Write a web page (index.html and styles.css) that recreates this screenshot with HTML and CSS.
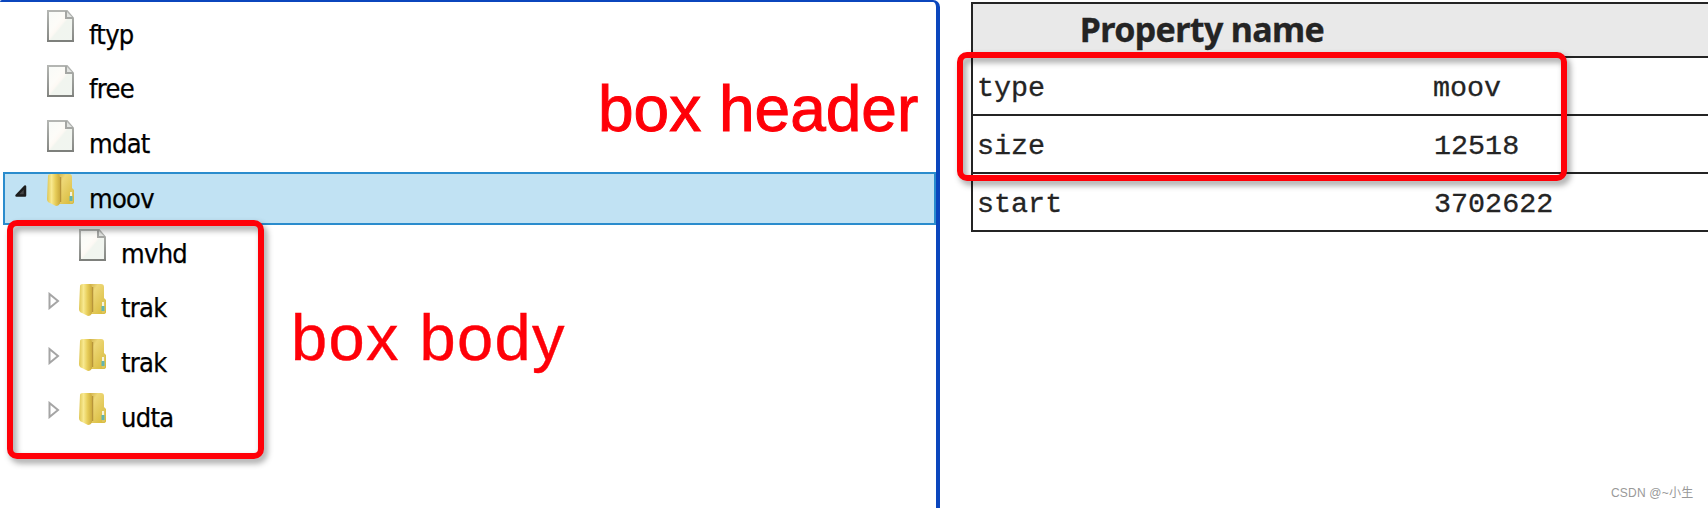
FILE: index.html
```
<!DOCTYPE html>
<html lang="en">
<head>
<meta charset="utf-8">
<title>Box viewer</title>
<link rel="stylesheet" href="styles.css">
</head>
<body>
<svg class="defs" width="0" height="0" aria-hidden="true">
  <defs>
    <linearGradient id="paper" x1="0" y1="0" x2="1" y2="1">
      <stop offset="0" stop-color="#f8fbf8"/><stop offset=".38" stop-color="#fdfcf8"/><stop offset=".48" stop-color="#fdf9f4"/><stop offset=".54" stop-color="#f1f5ef"/><stop offset="1" stop-color="#f1f5f0"/>
    </linearGradient>
    <linearGradient id="edge" x1="0" y1="0" x2="0" y2="1">
      <stop offset="0" stop-color="#b4b6b3"/><stop offset="1" stop-color="#858783"/>
    </linearGradient>
    <linearGradient id="front" x1="0" y1="0" x2="1" y2="0">
      <stop offset="0" stop-color="#dfc654"/><stop offset=".35" stop-color="#f8e990"/><stop offset=".65" stop-color="#e7cd59"/><stop offset="1" stop-color="#cbaa3c"/>
    </linearGradient>
    <linearGradient id="back" x1="0" y1="0" x2="1" y2="1">
      <stop offset="0" stop-color="#c4a238"/><stop offset=".3" stop-color="#eed878"/><stop offset="1" stop-color="#d6b836"/>
    </linearGradient>
    <symbol id="file" viewBox="0 0 27 32">
      <path d="M1 1H20L26 8V31H1Z" fill="url(#paper)" stroke="url(#edge)" stroke-width="2"/>
      <path d="M19 1V8H26" fill="#e2e4e1" stroke="#a5a7a4" stroke-width="2"/>
      <path d="M0 31H27" stroke="#7e807c" stroke-width="2"/>
    </symbol>
    <symbol id="folder" viewBox="0 0 27 32">
      <path d="M8 0H22Q25 0 25 3V14L27 16V28Q27 30 24 30H11Z" fill="url(#back)"/>
      <path d="M24 16Q26 14 26 17V28Q25 30 23 29Z" fill="#dec65f"/>
      <path d="M13.5 3V28" stroke="#b8953a" stroke-width="1.5"/>
      <path d="M1 2Q1 0 4 0H10Q13 1 13 4V29Q12 32 9 32L3 29Q0 28 0 25Z" fill="url(#front)"/>
      <path d="M23 18H25V22H23Z" fill="#f4f3df"/><path d="M22.500 22H25.500V27H22.500Z" fill="#63b4b0"/>
    </symbol>
    <symbol id="closed" viewBox="0 0 12 18">
      <path d="M1.500 2V16L10 9Z" fill="#fff" stroke="#a5a5a5" stroke-width="2"/>
    </symbol>
    <symbol id="open" viewBox="0 0 12 12">
      <path d="M10 1.500V10.500H1.500Z" fill="#444" stroke="#1d1d1d" stroke-width="2.500" stroke-linejoin="round"/>
    </symbol>
  </defs>
</svg>
<main class="viewer">
  <section class="tree">
    <div class="row"><svg class="icon"><use href="#file"/></svg><span class="label">ftyp</span></div>
    <div class="row"><svg class="icon"><use href="#file"/></svg><span class="label">free</span></div>
    <div class="row"><svg class="icon"><use href="#file"/></svg><span class="label">mdat</span></div>
    <div class="row selected"><svg class="toggle-open"><use href="#open"/></svg><svg class="icon"><use href="#folder"/></svg><span class="label">moov</span></div>
    <div class="row child"><svg class="icon"><use href="#file"/></svg><span class="label">mvhd</span></div>
    <div class="row child"><svg class="toggle"><use href="#closed"/></svg><svg class="icon"><use href="#folder"/></svg><span class="label">trak</span></div>
    <div class="row child"><svg class="toggle"><use href="#closed"/></svg><svg class="icon"><use href="#folder"/></svg><span class="label">trak</span></div>
    <div class="row child"><svg class="toggle"><use href="#closed"/></svg><svg class="icon"><use href="#folder"/></svg><span class="label">udta</span></div>
  </section>
  <section class="properties">
    <div class="prop head"><span>Property name</span></div>
    <div class="prop"><span>type</span><span>moov</span></div>
    <div class="prop"><span>size</span><span class="number">12518</span></div>
    <div class="prop"><span>start</span><span class="number">3702622</span></div>
  </section>
</main>
<div class="mark mark-body"></div>
<div class="mark mark-header"></div>
<div class="note note-header">box header</div>
<div class="note note-body">box body</div>
<div class="watermark">CSDN @~小生</div>
</body>
</html>
```
FILE: styles.css
```
*, *::before { box-sizing: border-box; }
body {
  margin: 0;
  width: 1708px;
  height: 508px;
  overflow: hidden;
  position: relative;
  background: #fff;
}
.defs { position: absolute; }
.viewer { display: flex; height: 508px; }
.tree {
  width: 940px;
  height: 520px;
  padding: 6px 0 0 3px;
  border-top: 2px solid #0b46bd;
  border-right: 4px solid #0b46bd;
  border-radius: 2px 7px 0 0;
  font: 27px/32px "DejaVu Sans Condensed", "DejaVu Sans", sans-serif;
  font-stretch: condensed;
  letter-spacing: -0.7px;
  color: #000;
  -webkit-text-stroke: .25px #000;
}
.row {
  display: flex;
  align-items: flex-start;
  height: 54.75px;
  padding: 2px 0 0 44px;
  position: relative;
}
.row.child { padding-left: 76px; }
.row.selected::before {
  content: "";
  position: absolute;
  z-index: -1;
  left: 0;
  right: 0;
  top: 0;
  height: 53px;
  border: 2px solid #2a8ccd;
  background: #c1e2f3;
}
.icon { width: 27px; height: 32px; flex: none; }
.label { margin: 8.6px 0 0 15px; }
.toggle { width: 12px; height: 18px; margin: 8px 19px 0 -31px; flex: none; }
.toggle-open { width: 12px; height: 12px; margin: 11px 20px 0 -32px; flex: none; }
.properties {
  width: 737px;
  height: 230px;
  margin: 2px 0 0 31px;
  border: 2px solid #242424;
  border-right: 0;
  color: #242424;
  font: 28.4px/62px "Liberation Mono", "Courier New", monospace;
  -webkit-text-stroke: .3px #242424;
}
.prop {
  display: grid;
  grid-template-columns: 456px 1fr;
  height: 58px;
  padding-left: 4px;
  border-bottom: 2px solid #242424;
}
.prop:last-child { border-bottom: 0; }
.prop.head {
  grid-template-columns: 458px 1fr;
  height: 54px;
  padding: 0;
  background: #e9e9e9;
  font: bold 34px/50px "Noto Sans", sans-serif;
  letter-spacing: -.65px;
  text-align: center;
}
.number { padding-left: 1px; }
.mark {
  position: absolute;
  border: 6px solid #ff0008;
  border-radius: 10px;
  filter: drop-shadow(3px 4px 3px rgba(0, 0, 0, .4));
}
.mark-body { left: 7px; top: 220px; width: 257px; height: 239px; }
.mark-header { left: 957px; top: 52px; width: 610px; height: 129px; }
.note {
  position: absolute;
  color: #ff0008;
  font: 64px/72px "Liberation Sans", Arial, sans-serif;
  white-space: nowrap;
}
.note-header { left: 598px; top: 73px; -webkit-text-stroke: 1px #ff0008; }
.note-body { left: 291px; top: 302px; font-size: 65px; letter-spacing: 1.4px; -webkit-text-stroke: .4px #ff0008; }
.watermark {
  position: absolute;
  left: 1611px;
  top: 485px;
  color: #999;
  font: 12px/17px "Liberation Sans", "Noto Sans CJK SC", sans-serif;
  letter-spacing: .2px;
  white-space: nowrap;
}
```
